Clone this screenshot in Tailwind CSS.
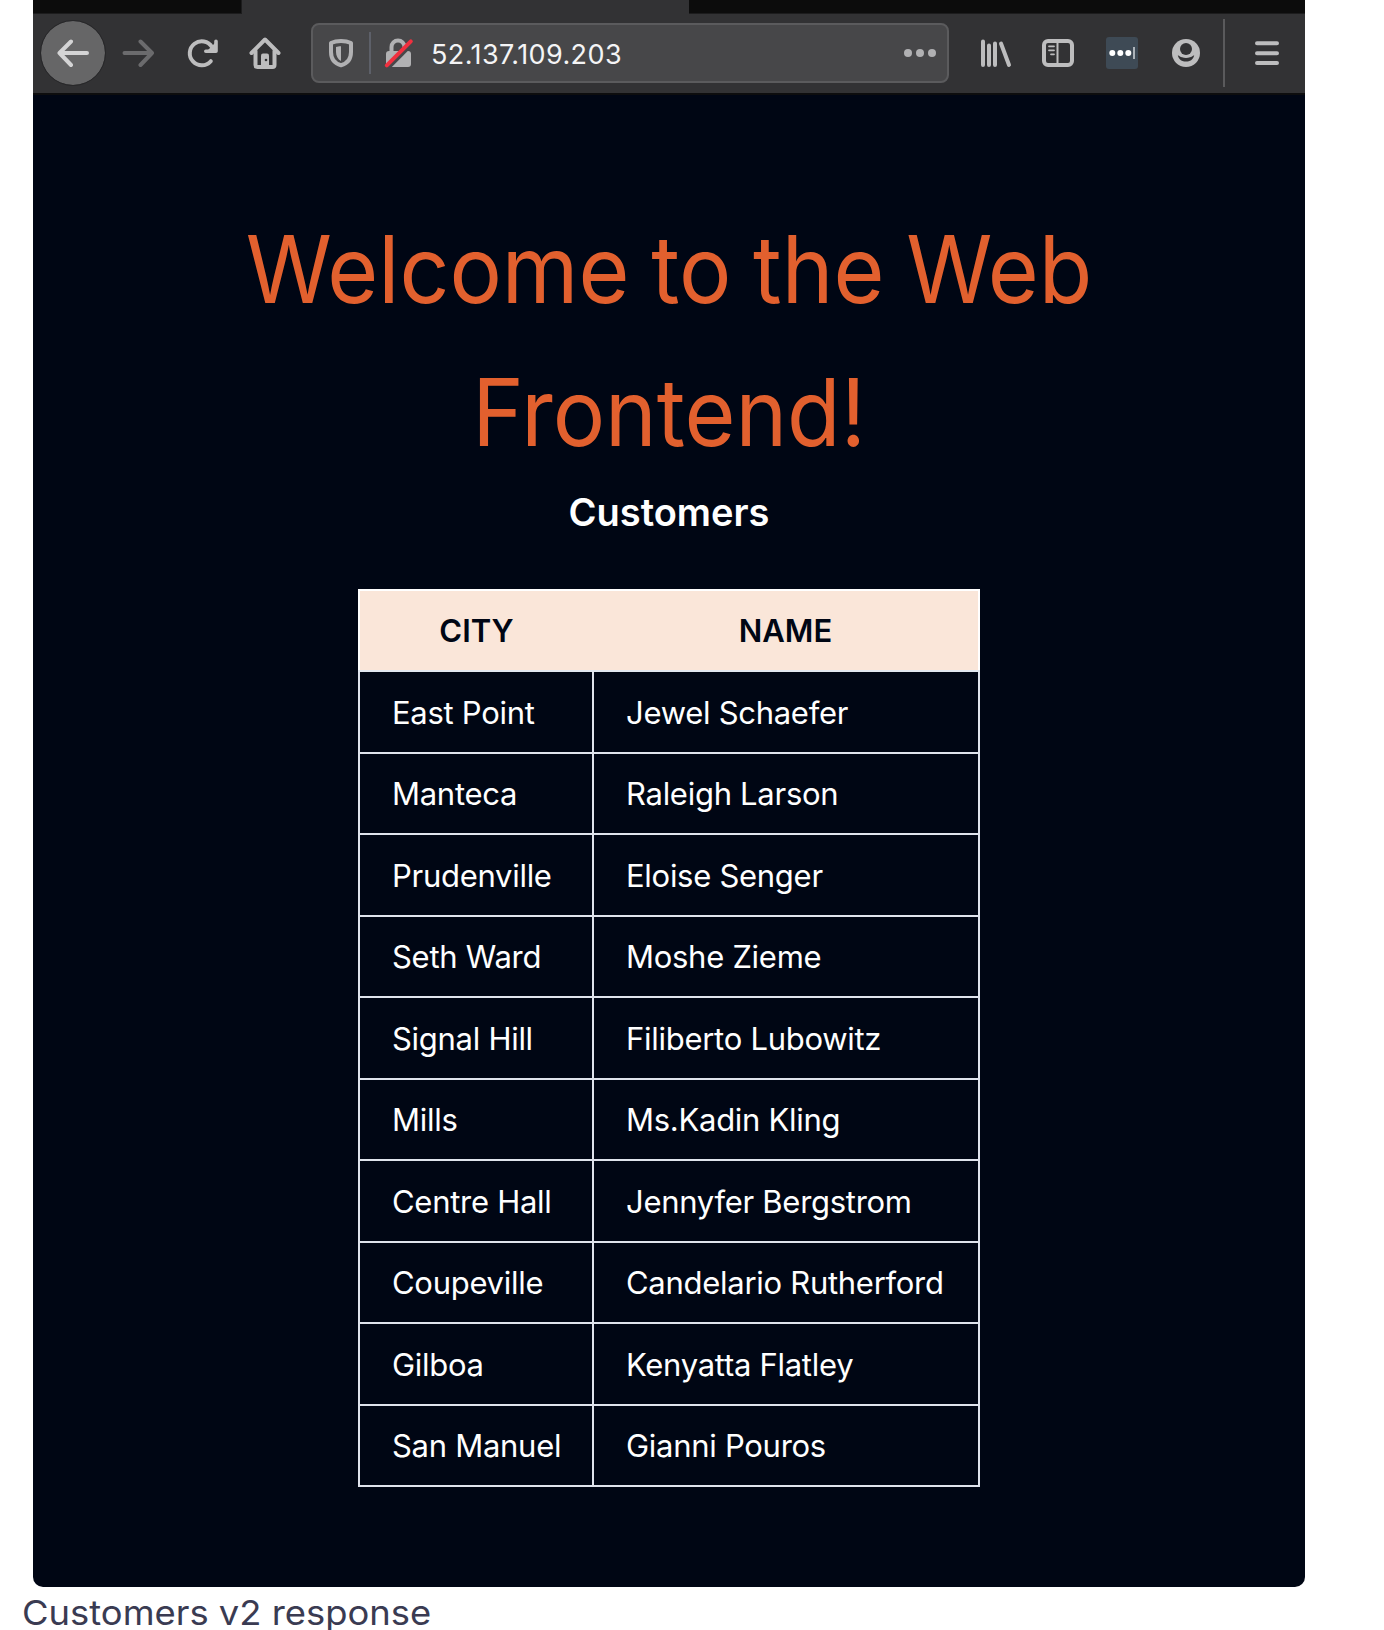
<!DOCTYPE html>
<html lang="en">
<head>
<meta charset="utf-8">
<title>Customers</title>
<script src="https://cdn.jsdelivr.net/npm/@tailwindcss/browser@4"></script>
</head>
<body class="bg-white font-['Inter',sans-serif] w-[1384px] h-[1630px] overflow-hidden">
<figure>
<div class="ml-[33px] w-[1272px] h-[1587px] rounded-b-[10px] overflow-hidden bg-[#000614] flex flex-col">
  <!-- tab strip -->
  <div class="h-[14px] flex shrink-0 bg-[#323234]">
    <div class="w-[209px] bg-[#0c0c0c] border-b border-r border-[#1c1c1d]"></div>
    <div class="w-[447px]"></div>
    <div class="flex-1 bg-[#0c0c0c] border-b border-[#1c1c1d]"></div>
  </div>
  <!-- toolbar -->
  <div class="h-[81px] shrink-0 bg-[#323234] border-b-2 border-[#0d0d0e] flex items-center pl-2 pb-px text-[#bdbdbe]">
    <div class="size-16 rounded-full bg-[#666667] outline outline-[#272729] flex items-center justify-center shrink-0 text-[#d4d4d5]">
      <svg class="size-8" viewBox="0 0 32 32" fill="none" stroke="currentColor" stroke-width="4" stroke-linecap="round" stroke-linejoin="round"><path d="M30 16H2.5M14 4.5 2.5 16 14 28"/></svg>
    </div>
    <svg class="size-8 ml-[17px] shrink-0 text-[#6b6b6d]" viewBox="0 0 32 32" fill="none" stroke="currentColor" stroke-width="4" stroke-linecap="round" stroke-linejoin="round"><path d="M2.5 16H30M18.500 4.500 30 16 18.500 28"/></svg>
    <svg class="size-8 ml-[32px] shrink-0" viewBox="0 0 32 32" fill="none" stroke="currentColor" stroke-width="4" stroke-linecap="round"><path d="M24.800 24.200A12 12 0 1 1 26 10"/><path d="M30 4.200V14.200H19.800" stroke-width="3.600" stroke-linejoin="round"/><path d="M30 5v9h-9z" fill="currentColor" stroke="none"/></svg>
    <svg class="size-8 ml-[31px] shrink-0" viewBox="0 0 32 32" fill="none" stroke="currentColor" stroke-width="4" stroke-linecap="round" stroke-linejoin="round"><path d="M2.500 16 16 2.500 29.500 16"/><path d="M6.500 14v14a2 2 0 0 0 2 2h15a2 2 0 0 0 2-2V14"/><path d="M12 30V18.500a2 2 0 0 1 2-2h4a2 2 0 0 1 2 2V30z" fill="currentColor" stroke="none"/><circle cx="17" cy="23" r="1.300" fill="#323234" stroke="none"/></svg>
    <!-- address bar -->
    <div class="ml-[30px] w-[638px] h-[60px] shrink-0 rounded-[8px] border-2 border-[#5b5b5d] bg-[#474749] flex items-center pl-[12px] pr-[11px] text-[#b1b1b3]">
      <svg class="size-8 shrink-0" viewBox="0 0 32 32"><path d="M16 4C12 4 8.500 4.800 6 6V15C6 21.500 9.500 26.500 16 28.200 22.500 26.500 26 21.500 26 15V6C23.500 4.800 20 4 16 4Z" fill="none" stroke="currentColor" stroke-width="4" stroke-linejoin="round"/><path d="M16 9.300c-2 0-3.500.300-5 .700V15c0 4 1.800 7.300 5 9z" fill="currentColor"/></svg>
      <div class="w-[2px] h-[42px] ml-[12px] bg-[#5d6069]"></div>
      <svg class="size-8 shrink-0 ml-[11px]" viewBox="0 0 32 32"><path d="M9.500 14V10a6.500 6.500 0 0 1 13 0v4" fill="none" stroke="currentColor" stroke-width="4"/><rect x="4" y="14" width="25" height="16" rx="3" fill="currentColor"/><path d="M5.300 31 30.300 6" stroke="#474749" stroke-width="5"/><path d="M4.800 28.300 28.800 4.300" stroke="#f0303f" stroke-width="4" stroke-linecap="round"/></svg>
      <span class="ml-[17px] pt-[4px] text-[27px] leading-8 text-[#f4f4f5] tracking-[0.4px]">52.137.109.203</span>
      <svg class="w-8 h-8 shrink-0 ml-auto" viewBox="0 0 32 32" fill="currentColor"><circle cx="4" cy="16" r="4"/><circle cx="16" cy="16" r="4"/><circle cx="28" cy="16" r="4"/></svg>
    </div>
    <svg class="size-8 ml-[31px] shrink-0" viewBox="0 0 32 32" fill="none" stroke="currentColor" stroke-width="4" stroke-linecap="round"><path d="M3 4.500V28M9 8.500V28M15 6.500V28M21 6.500 29 28"/></svg>
    <svg class="size-8 ml-[30px] shrink-0" viewBox="0 0 32 32" fill="none" stroke="currentColor" stroke-linecap="round"><rect x="2" y="4" width="28" height="24" rx="4" stroke-width="4"/><path d="M15.500 5V27" stroke-width="2"/><path d="M7 9.300h5M7 13.300h5M9 17.300h3" stroke-width="1.800"/></svg>
    <svg class="size-8 ml-[32px] shrink-0" viewBox="0 0 32 32"><rect width="32" height="32" rx="3" fill="#3e4a55"/><g fill="#fff"><circle cx="6.300" cy="16" r="3"/><circle cx="14.300" cy="16" r="3"/><circle cx="22.300" cy="16" r="3"/></g><path d="M28 10V22" stroke="#c9ced3" stroke-width="1.600"/></svg>
    <svg class="size-8 ml-[32px] shrink-0" viewBox="0 0 32 32"><circle cx="16" cy="16" r="14" fill="currentColor"/><circle cx="16" cy="12" r="6" fill="#323234"/><path d="M7.800 18.200C9 23 12 24.500 16 24.500S23 23 24.200 18.200C22.500 19 21.500 19.800 20 20.300 17.500 21.200 14.500 21.200 12 20.300 10.500 19.800 9.500 19 7.800 18.200Z" fill="#323234"/></svg>
    <div class="w-[2px] h-[68px] ml-[21px] bg-[#5a5a5c] shrink-0"></div>
    <svg class="size-8 ml-[26px] shrink-0" viewBox="0 0 32 32" fill="none" stroke="currentColor" stroke-width="4" stroke-linecap="round"><path d="M6 6.300H26M6 16.300H26M6 26H26"/></svg>
  </div>
  <!-- page -->
  <main class="flex flex-col items-center text-white">
    <h1 class="mt-[103px] text-[93px] leading-[143px] scale-x-[0.94] [word-spacing:-3px] text-[#e2602e] text-center w-[1000px]">Welcome to the Web<br>Frontend!</h1>
    <h2 class="mt-[-2px] text-[38px] leading-[60px] font-semibold">Customers</h2>
    <table class="mt-[47px] w-[622px] table-fixed border-collapse text-[31px] leading-[46px]">
      <colgroup><col class="w-[234px]"><col></colgroup>
      <thead>
        <tr class="h-[81px] bg-[#fae6d9] text-[#000614]"><th class="border-2 border-r-0 border-white border-b-[#e2e8f0] font-semibold">CITY</th><th class="border-2 border-l-0 border-white border-b-[#e2e8f0] font-semibold">NAME</th></tr>
      </thead>
      <tbody id="rows"></tbody>
    </table>
  </main>
</div>
<figcaption class="ml-[22px] mt-[4px] text-[34px] leading-[44px] text-[#3a3b52] origin-left scale-x-[1.07] w-max font-normal whitespace-nowrap">Customers v2 response</figcaption>
</figure>
<script>
const customers = [
  ['East Point', 'Jewel Schaefer'],
  ['Manteca', 'Raleigh Larson'],
  ['Prudenville', 'Eloise Senger'],
  ['Seth Ward', 'Moshe Zieme'],
  ['Signal Hill', 'Filiberto Lubowitz'],
  ['Mills', 'Ms.Kadin Kling'],
  ['Centre Hall', 'Jennyfer Bergstrom'],
  ['Coupeville', 'Candelario Rutherford'],
  ['Gilboa', 'Kenyatta Flatley'],
  ['San Manuel', 'Gianni Pouros'],
];
document.getElementById('rows').innerHTML = customers.map(c =>
  '<tr class="h-[81.5px]">' + c.map(t => `<td class="border-2 border-[#dfe3ec] pl-[32px] pt-[2px] tracking-[-0.28px] whitespace-nowrap">${t}</td>`).join('') + '</tr>').join('');
</script>
</body>
</html>
